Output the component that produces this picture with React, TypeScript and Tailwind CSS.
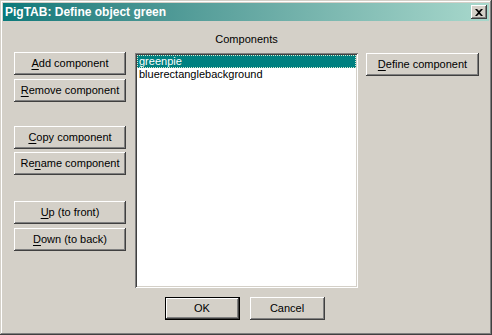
import React from "react";

const font = { fontFamily: '"Liberation Sans", Arial, sans-serif' };

function Btn({
  children,
  def = false,
  className = "",
}: {
  children: React.ReactNode;
  def?: boolean;
  className?: string;
}) {
  if (def) {
    return (
      <div className={"border border-black " + className}>
        <div className="h-full w-full flex items-center justify-center bg-[#d4d0c8] text-[11px] text-black shadow-[inset_-1px_-1px_#404040,inset_1px_1px_#ffffff,inset_-2px_-2px_#808080]">
          {children}
        </div>
      </div>
    );
  }
  return (
    <div
      className={
        "flex items-center justify-center bg-[#d4d0c8] text-[11px] text-black shadow-[inset_-1px_-1px_#404040,inset_1px_1px_#ffffff,inset_-2px_-2px_#808080] " +
        className
      }
    >
      {children}
    </div>
  );
}

function U({ children }: { children: React.ReactNode }) {
  return <span className="underline underline-offset-[2px] decoration-1">{children}</span>;
}

export default function App() {
  return (
    <div
      style={font}
      className="w-[492px] h-[335px] bg-[#d4d0c8] p-[3px] flex flex-col shadow-[inset_-1px_-1px_#404040,inset_1px_1px_#d4d0c8,inset_-2px_-2px_#808080,inset_2px_2px_#ffffff]"
    >
      {/* Title bar */}
      <div className="h-[18px] flex items-center pl-[2px] pr-[2px] bg-gradient-to-r from-[#08797a] to-[#a8d8cc]">
        <span className="text-white font-bold text-[12px] leading-none">PigTAB: Define object green</span>
        <div className="ml-auto w-[16px] h-[14px] bg-[#d4d0c8] flex items-center justify-center shadow-[inset_-1px_-1px_#404040,inset_1px_1px_#ffffff,inset_-2px_-2px_#808080]">
          <svg width="8" height="7" viewBox="0 0 8 7">
            <path d="M0 0 L2 0 L4 2 L6 0 L8 0 L5 3.5 L8 7 L6 7 L4 5 L2 7 L0 7 L3 3.5 Z" fill="#000" />
          </svg>
        </div>
      </div>

      {/* Content */}
      <div className="flex-1 flex flex-row pl-[11px]">
        {/* Left buttons */}
        <div className="w-[112px] pt-[31px] flex flex-col">
          <Btn className="h-[23px]">
            <U>A</U>dd component
          </Btn>
          <Btn className="h-[23px] mt-[4px]">
            <U>R</U>emove component
          </Btn>
          <Btn className="h-[23px] mt-[24px]">
            <U>C</U>opy component
          </Btn>
          <Btn className="h-[23px] mt-[3px]">
            Re<U>n</U>ame component
          </Btn>
          <Btn className="h-[23px] mt-[26px]">
            <U>U</U>p (to front)
          </Btn>
          <Btn className="h-[23px] mt-[4px]">
            <U>D</U>own (to back)
          </Btn>
        </div>

        {/* Middle */}
        <div className="ml-[9px] w-[223px] flex flex-col">
          <div className="mt-[12px] h-[13px] leading-[13px] text-[11px] text-black text-center">Components</div>
          <div className="mt-[7px] h-[235px] bg-white p-[2px] shadow-[inset_1px_1px_#808080,inset_-1px_-1px_#ffffff,inset_2px_2px_#404040,inset_-2px_-2px_#d4d0c8]">
            <div className="h-[13px] leading-[11px] bg-[#008080] text-white text-[11px] pl-[1px] border border-dotted border-[#d8e8d0]">
              greenpie
            </div>
            <div className="h-[13px] leading-[13px] text-black text-[11px] pl-[2px]">bluerectanglebackground</div>
          </div>
          <div className="mt-[9px] flex flex-row justify-center gap-[10px] pr-[4px]">
            <Btn def className="w-[75px] h-[23px]">
              OK
            </Btn>
            <Btn className="w-[75px] h-[23px]">Cancel</Btn>
          </div>
        </div>

        {/* Right */}
        <div className="ml-[8px] w-[113px] pt-[32px]">
          <Btn className="h-[23px]">
            <U>D</U>efine component
          </Btn>
        </div>
      </div>
    </div>
  );
}
